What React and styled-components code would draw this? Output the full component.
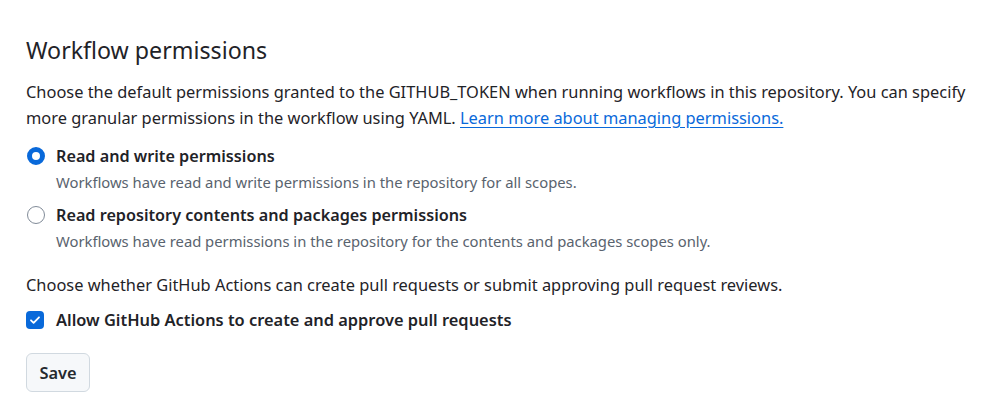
import React from "react";
import styled, { createGlobalStyle } from "styled-components";

const GlobalStyle = createGlobalStyle`
  body {
    margin: 0;
    background: #ffffff;
    font-family: "Noto Sans", "Open Sans", sans-serif;
    color: #1f2328;
  }
`;

const Wrapper = styled.div`
  padding: 34px 26px 0;
  display: flex;
  flex-direction: column;
  align-items: flex-start;
`;

const Heading = styled.h2`
  margin: 0;
  font-size: 23.2px;
  font-weight: 400;
  line-height: 32px;
  color: #1f2328;
`;

const Text = styled.p`
  margin: ${(p) => p.$mt || 0}px 0 0;
  font-size: 16.4px;
  line-height: ${(p) => p.$lh || 24}px;
  color: #1f2328;

  a {
    color: #0969da;
    text-decoration: underline;
    text-underline-offset: 3px;
  }
`;

const Option = styled.label`
  display: flex;
  flex-direction: column;
  margin-top: ${(p) => p.$mt}px;
`;

const OptionRow = styled.div`
  display: flex;
  align-items: center;
  gap: 11px;
  font-size: 16.2px;
  font-weight: 600;
  line-height: 24px;
  color: #1f2328;
`;

const Radio = styled.span`
  box-sizing: border-box;
  width: 18px;
  height: 18px;
  margin-left: 1px;
  border-radius: 50%;
  background: #ffffff;
  border: ${(p) => (p.$checked ? "5px solid #0969da" : "1px solid #818b98")};
  flex-shrink: 0;
`;

const Checkbox = styled.span`
  box-sizing: border-box;
  width: 18px;
  height: 18px;
  border-radius: 4px;
  background: #0969da;
  display: flex;
  align-items: center;
  justify-content: center;
  flex-shrink: 0;
`;

const CheckLabel = styled.span`
  margin-left: 1px;
  font-size: 16.4px;
`;

const Note = styled.span`
  margin: 4px 0 0 30px;
  font-size: 14.8px;
  font-weight: 400;
  line-height: 20px;
  color: #59636e;
`;

const Button = styled.button`
  margin-top: 21px;
  width: 64px;
  height: 39px;
  border: 1px solid #d1d9e0;
  border-radius: 6px;
  background: #f6f8fa;
  font-family: inherit;
  font-size: 16.4px;
  font-weight: 600;
  color: #25292e;
  cursor: pointer;
`;

const App = () => {
  return (
    <>
      <GlobalStyle />
      <Wrapper>
        <Heading>Workflow permissions</Heading>
        <Text $mt={13} $lh={26}>
          Choose the default permissions granted to the GITHUB_TOKEN when
          running workflows in this repository. You can specify more granular
          permissions in the workflow using YAML.{" "}
          <a href="#">Learn more about managing permissions.</a>
        </Text>

        <Option $mt={13}>
          <OptionRow>
            <Radio $checked />
            Read and write permissions
          </OptionRow>
          <Note>
            Workflows have read and write permissions in the repository for all
            scopes.
          </Note>
        </Option>

        <Option $mt={11}>
          <OptionRow>
            <Radio />
            Read repository contents and packages permissions
          </OptionRow>
          <Note>
            Workflows have read permissions in the repository for the contents
            and packages scopes only.
          </Note>
        </Option>

        <Text $mt={22}>
          Choose whether GitHub Actions can create pull requests or submit
          approving pull request reviews.
        </Text>

        <Option $mt={11}>
          <OptionRow>
            <Checkbox>
              <svg width="12" height="12" viewBox="0 0 12 12" fill="none">
                <path
                  d="M2 6.3l2.6 2.6L10 3.3"
                  stroke="#ffffff"
                  strokeWidth="1.8"
                  strokeLinecap="round"
                  strokeLinejoin="round"
                />
              </svg>
            </Checkbox>
            <CheckLabel>
              Allow GitHub Actions to create and approve pull requests
            </CheckLabel>
          </OptionRow>
        </Option>

        <Button>Save</Button>
      </Wrapper>
    </>
  );
};

export default App;
